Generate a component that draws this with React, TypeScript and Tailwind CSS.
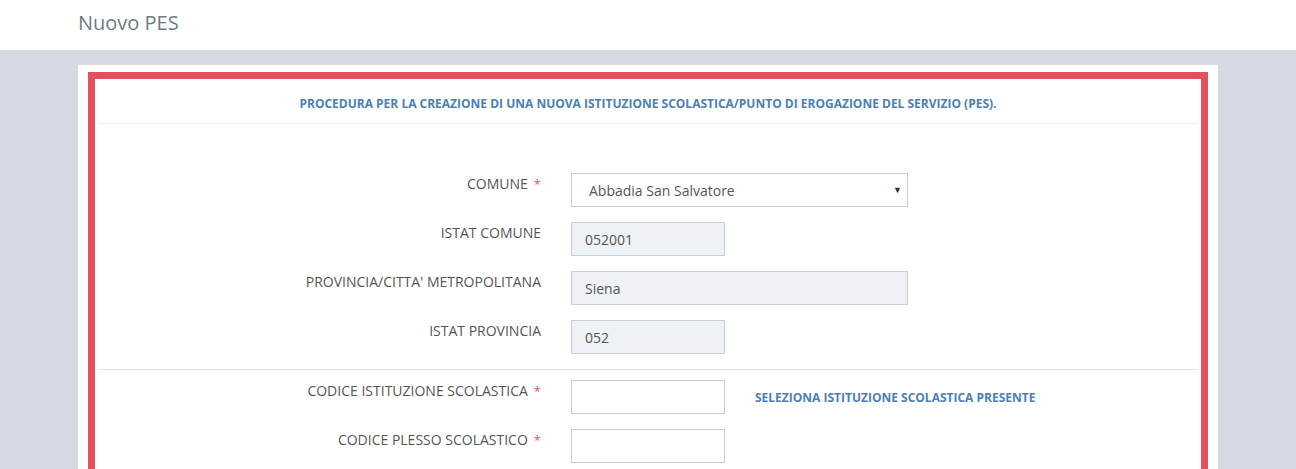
export default function App() {
  const font = { fontFamily: '"Open Sans", "Liberation Sans", sans-serif' };

  return (
    <div className="min-h-screen bg-[#d5dae3]" style={font}>
      {/* Title bar */}
      <div className="h-[50px] bg-white flex items-center px-[78px]">
        <h1 className="text-[20px] text-[#6b7b86] -mt-[4px]">Nuovo PES</h1>
      </div>

      <div className="px-[78px] pt-[15px]">
        <div className="bg-white px-[10px] pt-[7px]">
          <div className="border-[7px] border-[#e5505e] border-b-0 pb-[20px]">
            <div className="h-[44px] flex items-center justify-center">
              <p className="text-[12px] font-bold text-[#4a80b8] mt-[6px]">
                PROCEDURA PER LA CREAZIONE DI UNA NUOVA ISTITUZIONE SCOLASTICA/PUNTO DI EROGAZIONE DEL SERVIZIO (PES).
              </p>
            </div>
            <div className="mx-[3px] border-t border-[#eeeeee]" />

            <div className="pt-[49px] flex flex-col gap-[15px]">
              <Row label="COMUNE" required>
                <div className="w-[337px] h-[34px] border border-[#c9ced6] flex items-center justify-between pl-[17px] pr-[5px] text-[14px] text-[#555]">
                  <span>Abbadia San Salvatore</span>
                  <span className="text-[9px] text-[#333]">▼</span>
                </div>
              </Row>
              <Row label="ISTAT COMUNE">
                <ReadOnly value="052001" width="w-[154px]" />
              </Row>
              <Row label="PROVINCIA/CITTA' METROPOLITANA">
                <ReadOnly value="Siena" width="w-[337px]" />
              </Row>
              <Row label="ISTAT PROVINCIA">
                <ReadOnly value="052" width="w-[154px]" />
              </Row>
            </div>

            <div className="mx-[3px] mt-[15px] mb-[10px] border-t border-[#e3e3e3]" />

            <div className="flex flex-col gap-[15px]">
              <Row label="CODICE ISTITUZIONE SCOLASTICA" required>
                <div className="flex items-center">
                  <div className="w-[154px] h-[34px] border border-[#c9ced6]" />
                  <a className="ml-[30px] mt-[2px] text-[12px] font-bold text-[#4a80b8]">
                    SELEZIONA ISTITUZIONE SCOLASTICA PRESENTE
                  </a>
                </div>
              </Row>
              <Row label="CODICE PLESSO SCOLASTICO" required>
                <div className="w-[154px] h-[34px] border border-[#c9ced6]" />
              </Row>
            </div>
          </div>
        </div>
      </div>
    </div>
  );
}

function Row({
  label,
  required,
  children,
}: {
  label: string;
  required?: boolean;
  children: React.ReactNode;
}) {
  return (
    <div className="flex">
      <div className="w-[446px] shrink-0 text-right text-[14px] leading-[20px] text-[#555] pt-[1px]">
        {label}
        {required && <span className="text-[#e5505e] text-[13px] ml-[6px]">*</span>}
      </div>
      <div className="ml-[30px]">{children}</div>
    </div>
  );
}

function ReadOnly({ value, width }: { value: string; width: string }) {
  return (
    <div
      className={`${width} h-[34px] bg-[#eef1f5] border border-[#c9ced6] flex items-center pl-[13px] text-[14px] text-[#555]`}
    >
      {value}
    </div>
  );
}
